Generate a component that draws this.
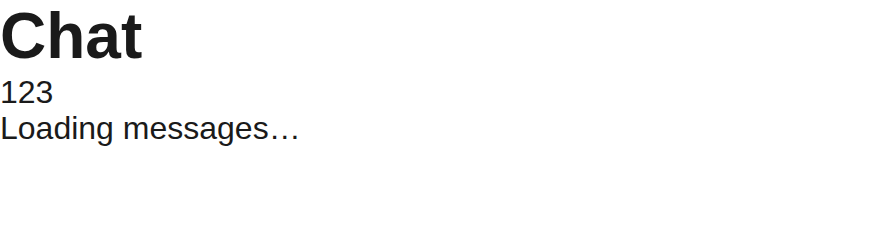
export default function App() {
  return (
    <div className="font-['Liberation_Sans',Arial,sans-serif] text-[32px] leading-[1.15] text-[#1a1a1a]">
      <h1 className="text-[64px] font-bold leading-[1.15]">Chat</h1>
      <div>123</div>
      <div>Loading messages…</div>
    </div>
  );
}
